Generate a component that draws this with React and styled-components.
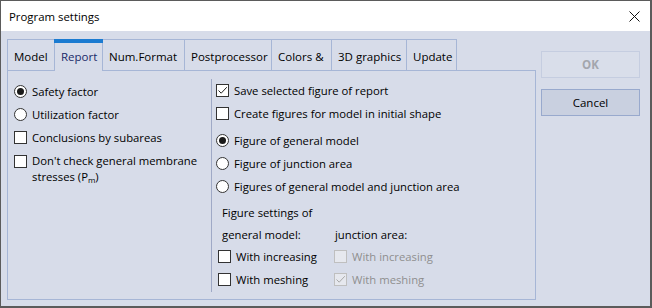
import React from "react";
import styled, { createGlobalStyle } from "styled-components";

const Global = createGlobalStyle`
  html, body { margin: 0; padding: 0; background: #ffffff; }
  body { font-family: "Open Sans", "Noto Sans", sans-serif; font-size: 11.3px; color: #000; }
  * { box-sizing: border-box; }
`;

const Window = styled.div`
  width: 652px;
  height: 308px;
  border-style: solid;
  border-color: #5b5b5b;
  border-width: 1px 2px 2px 1px;
  background: #d7dce9;
  display: flex;
  flex-direction: column;
`;

const TitleBar = styled.div`
  height: 30px;
  background: #ffffff;
  display: flex;
  align-items: center;
  justify-content: space-between;
  padding: 0 9px 0 8px;
  font-size: 11.4px;
  flex: none;
`;

const CloseBtn = styled.div`
  width: 14px;
  height: 14px;
  display: flex;
  align-items: center;
  justify-content: center;
`;

const Body = styled.div`
  display: flex;
  gap: 5px;
  padding: 8px 0 0 6px;
`;

const TabControl = styled.div`
  width: 529px;
  display: flex;
  flex-direction: column;
`;

const TabStrip = styled.div`
  display: flex;
  height: 31px;
`;

const Tab = styled.div`
  position: relative;
  width: ${(p) => p.$w}px;
  height: ${(p) => (p.$active ? 32 : 31)}px;
  margin-bottom: ${(p) => (p.$active ? -1 : 0)}px;
  z-index: ${(p) => (p.$active ? 1 : 0)};
  border-top: 1px solid #a6b6d6;
  border-left: 1px solid #a6b6d6;
  border-right: ${(p) => (p.$last ? "1px solid #a6b6d6" : "none")};
  background: #d7dce9;
  display: flex;
  align-items: center;
  padding: 2px 0 0 6px;
  font-size: 11.5px;
  color: ${(p) => (p.$active ? "#1a2a6a" : "#000")};
  white-space: nowrap;
  &::before {
    content: "";
    display: ${(p) => (p.$active ? "block" : "none")};
    position: absolute;
    top: -1px;
    left: -1px;
    right: -1px;
    height: 4px;
    background: #1b7bd1;
  }
`;

const Panel = styled.div`
  height: 230px;
  border: 1px solid #a6b6d6;
  display: flex;
`;

const LeftCol = styled.div`
  width: 203px;
  padding: 9px 0 0 6px;
  display: flex;
  flex-direction: column;
`;

const RightCol = styled.div`
  margin-top: 8px;
  height: 213px;
  border-left: 1px solid #9fa9c6;
  padding-left: 4px;
  display: flex;
  flex-direction: column;
`;

const Row = styled.div`
  height: ${(p) => p.$h || 23}px;
  margin-top: ${(p) => p.$mt || 0}px;
  display: flex;
  align-items: center;
  gap: 5px;
  white-space: nowrap;
  color: ${(p) => (p.$disabled ? "#8f8f8f" : "#000")};
`;

const MultiRow = styled.div`
  display: flex;
  align-items: flex-start;
  gap: 5px;
  padding-top: 4px;
  line-height: 16px;
  & > :first-child { margin-top: 1.5px; }
`;

const Sub = styled.sub`
  font-size: 8px;
  vertical-align: -2px;
`;

const Box = styled.span`
  width: 13px;
  height: 13px;
  flex: none;
  border: 1px solid ${(p) => (p.$disabled ? "#bfbfbf" : "#333333")};
  background: ${(p) => (p.$disabled ? "#e6e8ee" : "#ffffff")};
  display: flex;
  align-items: center;
  justify-content: center;
`;

const Circle = styled.span`
  width: 13px;
  height: 13px;
  flex: none;
  border-radius: 50%;
  border: 1px solid #333333;
  background: #ffffff;
  display: flex;
  align-items: center;
  justify-content: center;
  &::after {
    content: "";
    display: ${(p) => (p.$on ? "block" : "none")};
    width: 7px;
    height: 7px;
    border-radius: 50%;
    background: #1a1a1a;
  }
`;

const SubGrid = styled.div`
  display: grid;
  grid-template-columns: 116px auto;
  margin-left: 2px;
`;

const Label = styled.div`
  height: ${(p) => p.$h || 22}px;
  margin-top: ${(p) => p.$mt || 0}px;
  display: flex;
  align-items: center;
  padding-left: ${(p) => p.$pl ?? 4}px;
  white-space: nowrap;
`;

const Buttons = styled.div`
  display: flex;
  flex-direction: column;
  gap: 11px;
  padding-top: 12px;
`;

const Button = styled.div`
  width: 99px;
  height: 27px;
  display: flex;
  align-items: center;
  justify-content: center;
  font-size: 11.5px;
  border: 1px solid ${(p) => (p.$disabled ? "#c5cde0" : "#98a9cd")};
  background: ${(p) => (p.$disabled ? "#d9deea" : "#c9d0e0")};
  color: ${(p) => (p.$disabled ? "#a3a6ad" : "#000")};
  font-weight: ${(p) => (p.$disabled ? 700 : 400)};
`;

const Check = ({ color = "#222" }) => (
  <svg width="11" height="11" viewBox="0 0 11 11">
    <path d="M1.5 5.5 L4.2 8.2 L9.8 2.2" fill="none" stroke={color} strokeWidth="1" />
  </svg>
);

const CheckBox = ({ checked, disabled }) => (
  <Box $disabled={disabled}>{checked && <Check color={disabled ? "#a9a9a9" : "#222"} />}</Box>
);

const tabs = [
  ["Model", 47],
  ["Report", 48],
  ["Num.Format", 82],
  ["Postprocessor", 87],
  ["Colors &", 60],
  ["3D graphics", 75],
  ["Update", 51],
];

export default function App() {
  return (
    <>
      <Global />
      <Window>
        <TitleBar>
          <span>Program settings</span>
          <CloseBtn>
            <svg width="11" height="11" viewBox="0 0 11 11">
              <path d="M0.5 0.5 L10.5 10.5 M10.5 0.5 L0.5 10.5" stroke="#111" strokeWidth="1" />
            </svg>
          </CloseBtn>
        </TitleBar>
        <Body>
          <TabControl>
            <TabStrip>
              {tabs.map(([t, w], i) => (
                <Tab key={t} $w={w} $active={t === "Report"} $last={i === tabs.length - 1}>
                  {t}
                </Tab>
              ))}
            </TabStrip>
            <Panel>
              <LeftCol>
                <Row>
                  <Circle $on />
                  Safety factor
                </Row>
                <Row>
                  <Circle />
                  Utilization factor
                </Row>
                <Row>
                  <CheckBox />
                  Conclusions by subareas
                </Row>
                <MultiRow>
                  <CheckBox />
                  <span>
                    Don't check general membrane
                    <br />
                    stresses (P<Sub>m</Sub>)
                  </span>
                </MultiRow>
              </LeftCol>
              <RightCol>
                <Row>
                  <CheckBox checked />
                  Save selected figure of report
                </Row>
                <Row>
                  <CheckBox />
                  Create figures for model in initial shape
                </Row>
                <Row $mt={4}>
                  <Circle $on />
                  Figure of general model
                </Row>
                <Row>
                  <Circle />
                  Figure of junction area
                </Row>
                <Row>
                  <Circle />
                  Figures of general model and junction area
                </Row>
                <SubGrid>
                  <Label $mt={3}>Figure settings of</Label>
                  <Label $mt={3} />
                  <Label>general model:</Label>
                  <Label $pl={1}>junction area:</Label>
                  <Row>
                    <CheckBox />
                    With increasing
                  </Row>
                  <Row $disabled>
                    <CheckBox disabled />
                    With increasing
                  </Row>
                  <Row>
                    <CheckBox />
                    With meshing
                  </Row>
                  <Row $disabled>
                    <CheckBox disabled checked />
                    With meshing
                  </Row>
                </SubGrid>
              </RightCol>
            </Panel>
          </TabControl>
          <Buttons>
            <Button $disabled>OK</Button>
            <Button>Cancel</Button>
          </Buttons>
        </Body>
      </Window>
    </>
  );
}
